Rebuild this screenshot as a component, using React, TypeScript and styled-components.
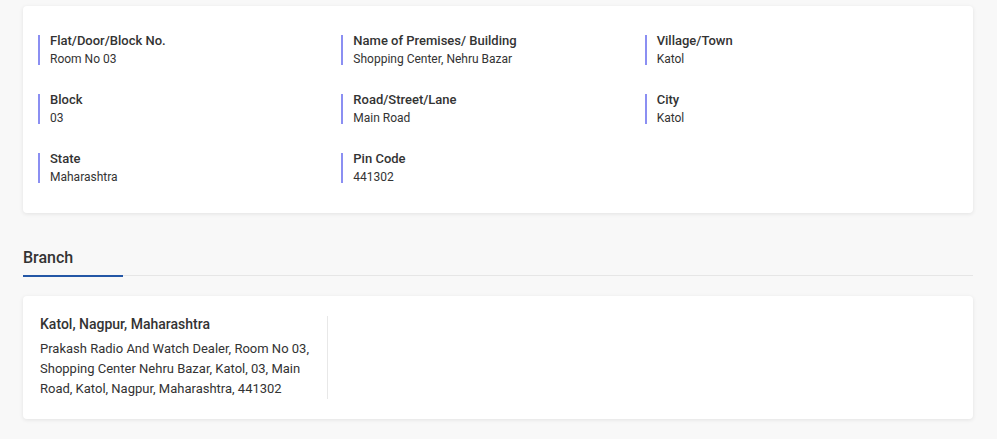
import React from "react";
import styled, { createGlobalStyle } from "styled-components";

const GlobalStyle = createGlobalStyle`
  html, body { margin: 0; padding: 0; background: #f8f8f8; }
  body { font-family: Roboto, "Noto Sans", "Liberation Sans", sans-serif; color: #333; }
  * { box-sizing: border-box; }
`;

const Page = styled.div`
  padding: 6px 24px 20px 23px;
  display: flex;
  flex-direction: column;
`;

const Card = styled.section`
  background: #fff;
  border-radius: 4px;
  box-shadow: 0 1px 4px rgba(0, 0, 0, 0.09);
`;

const DetailsCard = styled(Card)`
  padding: 29px 25px 30px 15px;
`;

const FieldGrid = styled.div`
  display: grid;
  grid-template-columns: repeat(3, 1fr);
  row-gap: 29px;
`;

const Field = styled.div`
  border-left: 2px solid #8b8ff2;
  padding-left: 10px;
  height: 30px;
  display: flex;
  flex-direction: column;
`;

const Label = styled.div`
  font-size: 13px;
  line-height: 11px;
  font-weight: 500;
  color: #333;
  white-space: nowrap;
`;

const Value = styled.div`
  margin-top: 7px;
  font-size: 12px;
  line-height: 13px;
  color: #333;
  white-space: nowrap;
`;

const TabBar = styled.div`
  margin-top: 35px;
  display: flex;
  border-bottom: 1px solid #e6e6e6;
`;

const Tab = styled.div`
  width: 100px;
  padding-bottom: 8px;
  margin-bottom: -2px;
  border-bottom: 2px solid #2457a6;
  font-size: 16px;
  line-height: 19px;
  font-weight: 500;
  color: #333;
`;

const BranchCard = styled(Card)`
  margin-top: 20px;
  padding: 20px 17px;
  display: flex;
`;

const BranchColumn = styled.div`
  width: 288px;
  padding-right: 14px;
  border-right: 1px solid #e8e8e8;
`;

const BranchTitle = styled.div`
  font-size: 14px;
  line-height: 17px;
  font-weight: 500;
  color: #333;
`;

const BranchAddress = styled.div`
  margin-top: 6px;
  font-size: 13px;
  line-height: 20px;
  color: #333;
`;

const fields: [string, string][] = [
  ["Flat/Door/Block No.", "Room No 03"],
  ["Name of Premises/ Building", "Shopping Center, Nehru Bazar"],
  ["Village/Town", "Katol"],
  ["Block", "03"],
  ["Road/Street/Lane", "Main Road"],
  ["City", "Katol"],
  ["State", "Maharashtra"],
  ["Pin Code", "441302"],
];

export default function App() {
  return (
    <>
      <GlobalStyle />
      <Page>
        <DetailsCard>
          <FieldGrid>
            {fields.map(([label, value]) => (
              <Field key={label}>
                <Label>{label}</Label>
                <Value>{value}</Value>
              </Field>
            ))}
          </FieldGrid>
        </DetailsCard>
        <TabBar>
          <Tab>Branch</Tab>
        </TabBar>
        <BranchCard>
          <BranchColumn>
            <BranchTitle>Katol, Nagpur, Maharashtra</BranchTitle>
            <BranchAddress>
              Prakash Radio And Watch Dealer, Room No 03, Shopping Center Nehru
              Bazar, Katol, 03, Main Road, Katol, Nagpur, Maharashtra, 441302
            </BranchAddress>
          </BranchColumn>
        </BranchCard>
      </Page>
    </>
  );
}
